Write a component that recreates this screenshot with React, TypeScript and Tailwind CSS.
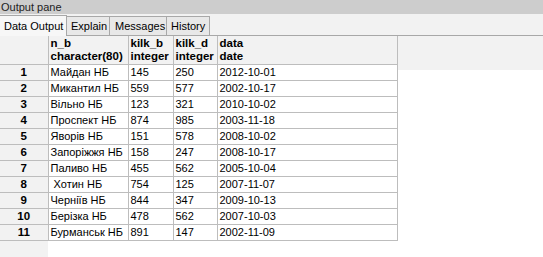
import React from "react";

const rows: [string, string, string, string, string][] = [
  ["1", "Майдан НБ", "145", "250", "2012-10-01"],
  ["2", "Микантил НБ", "559", "577", "2002-10-17"],
  ["3", "Вільно НБ", "123", "321", "2010-10-02"],
  ["4", "Проспект НБ", "874", "985", "2003-11-18"],
  ["5", "Яворів НБ", "151", "578", "2008-10-02"],
  ["6", "Запоріжжя НБ", "158", "247", "2008-10-17"],
  ["7", "Паливо НБ", "455", "562", "2005-10-04"],
  ["8", "\u00a0Хотин НБ", "754", "125", "2007-11-07"],
  ["9", "Черніїв НБ", "844", "347", "2009-10-13"],
  ["10", "Берізка НБ", "478", "562", "2007-10-03"],
  ["11", "Бурманськ НБ", "891", "147", "2002-11-09"],
];

export default function App() {
  return (
    <div
      className="w-[543px] h-[257px] overflow-hidden bg-white flex flex-col text-[11px] text-black"
      style={{ fontFamily: '"Liberation Sans", Arial, sans-serif' }}
    >
      <div className="h-[14px] shrink-0 bg-[#cdcdcd] flex items-center pl-[1px] leading-none text-[11px] text-[#222]">
        Output pane
      </div>
      <div className="h-[22px] shrink-0 bg-[#f2f2f2] flex items-end border-b border-[#a8a8a8]">
        <div className="h-[21px] w-[67px] shrink-0 whitespace-nowrap bg-[#f7f7f7] border-t border-r border-[#a8a8a8] flex items-center pl-[4px] text-[11px] relative top-[1px] z-10">
          Data Output
        </div>
        <div className="h-[19px] w-[43px] shrink-0 whitespace-nowrap bg-[#e8e8e8] border-t border-r border-[#a8a8a8] flex items-center pl-[4px] text-[11px]">
          Explain
        </div>
        <div className="h-[19px] w-[57px] shrink-0 whitespace-nowrap bg-[#e8e8e8] border-t border-r border-[#a8a8a8] flex items-center pl-[5px] text-[11px]">
          Messages
        </div>
        <div className="h-[19px] w-[43px] shrink-0 whitespace-nowrap bg-[#e8e8e8] border-t border-r border-[#a8a8a8] flex items-center pl-[4px] text-[11px]">
          History
        </div>
      </div>
      <div className="flex flex-1 bg-white">
        <div className="flex flex-col">
          <table className="border-collapse table-fixed w-[397px]">
            <colgroup>
              <col className="w-[48px]" />
              <col className="w-[80px]" />
              <col className="w-[45px]" />
              <col className="w-[44px]" />
              <col className="w-[180px]" />
            </colgroup>
            <thead>
              <tr className="h-[28px] bg-[#f2f2f2]">
                <th className="border border-[#bdbdbd] border-t-0 border-l-0"></th>
                {[
                  ["n_b", "character(80)"],
                  ["kilk_b", "integer"],
                  ["kilk_d", "integer"],
                  ["data", "date"],
                ].map(([a, b]) => (
                  <th
                    key={a}
                    className="border border-[#bdbdbd] border-t-0 text-left align-top pl-[2px] pt-[1px] font-bold text-[11.5px] leading-[13px] whitespace-nowrap overflow-hidden"
                  >
                    <div>{a}</div>
                    <div>{b}</div>
                  </th>
                ))}
              </tr>
            </thead>
            <tbody>
              {rows.map((r) => (
                <tr key={r[0]} className="h-[16px]">
                  <td className="bg-[#f2f2f2] border border-[#bdbdbd] border-l-0 text-center font-bold text-[11.5px] leading-[14px] p-0">
                    {r[0]}
                  </td>
                  {r.slice(1).map((c, i) => (
                    <td
                      key={i}
                      className="border border-[#bdbdbd] pl-[2px] text-[11px] leading-[14px] p-0 whitespace-nowrap overflow-hidden"
                    >
                      {c}
                    </td>
                  ))}
                </tr>
              ))}
            </tbody>
          </table>
          <div className="w-[48px] flex-1 bg-[#f2f2f2]"></div>
        </div>
        <div className="flex-1 flex flex-col">
          <div className="h-[34px] bg-[#f2f2f2]"></div>
        </div>
      </div>
    </div>
  );
}
